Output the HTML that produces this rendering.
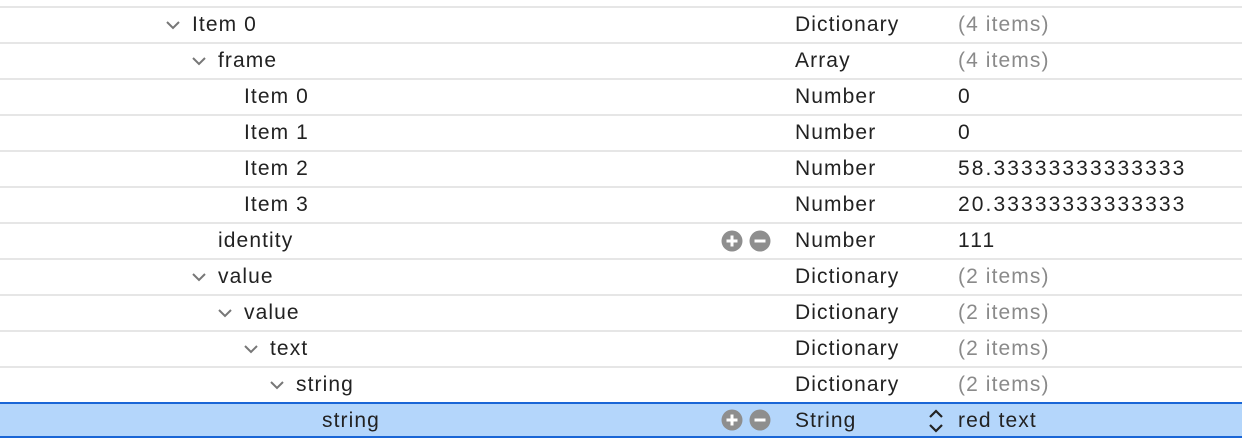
<html><head><style>
body{margin:0;width:1242px;height:446px;background:#fff;position:relative;overflow:hidden;font-family:"Liberation Sans",sans-serif;font-size:21px;letter-spacing:1.1px;color:#222}
.r{position:absolute;left:0;width:1242px;height:34px;border-top:2px solid #e6e6e6;line-height:34px}
.r span{position:absolute;top:0}
.g{color:#8a8a8a}
.n{letter-spacing:2.1px}
.sel{background:#b4d6fb;border-top:2px solid #1a66d6;border-bottom:2px solid #1a66d6;height:32px}
svg{position:absolute}
</style></head><body>
<div class="r" style="top:6px"><svg style="left:165px;top:12px" width="16" height="10"><path d="M2 2 L8 8 L14 2" stroke="#777" stroke-width="2" fill="none"/></svg><span style="left:192px">Item 0</span><span style="left:795px">Dictionary</span><span class="g" style="left:958px">(4 items)</span></div>
<div class="r" style="top:42px"><svg style="left:191px;top:12px" width="16" height="10"><path d="M2 2 L8 8 L14 2" stroke="#777" stroke-width="2" fill="none"/></svg><span style="left:218px">frame</span><span style="left:795px">Array</span><span class="g" style="left:958px">(4 items)</span></div>
<div class="r" style="top:78px"><span style="left:244px">Item 0</span><span style="left:795px">Number</span><span style="left:958px">0</span></div>
<div class="r" style="top:114px"><span style="left:244px">Item 1</span><span style="left:795px">Number</span><span style="left:958px">0</span></div>
<div class="r" style="top:150px"><span style="left:244px">Item 2</span><span style="left:795px">Number</span><span class="n" style="left:958px">58.33333333333333</span></div>
<div class="r" style="top:186px"><span style="left:244px">Item 3</span><span style="left:795px">Number</span><span class="n" style="left:958px">20.33333333333333</span></div>
<div class="r" style="top:222px"><svg style="left:721px;top:6px" width="52" height="22"><circle cx="11" cy="11" r="10.5" fill="#8e8e8e"/><path d="M5.5 11H16.5M11 5.5V16.5" stroke="#fff" stroke-width="3"/><circle cx="39" cy="11" r="10.5" fill="#8e8e8e"/><path d="M33.5 11H44.5" stroke="#fff" stroke-width="3"/></svg><span style="left:218px">identity</span><span style="left:795px">Number</span><span class="n" style="left:958px">111</span></div>
<div class="r" style="top:258px"><svg style="left:191px;top:12px" width="16" height="10"><path d="M2 2 L8 8 L14 2" stroke="#777" stroke-width="2" fill="none"/></svg><span style="left:218px">value</span><span style="left:795px">Dictionary</span><span class="g" style="left:958px">(2 items)</span></div>
<div class="r" style="top:294px"><svg style="left:217px;top:12px" width="16" height="10"><path d="M2 2 L8 8 L14 2" stroke="#777" stroke-width="2" fill="none"/></svg><span style="left:244px">value</span><span style="left:795px">Dictionary</span><span class="g" style="left:958px">(2 items)</span></div>
<div class="r" style="top:330px"><svg style="left:243px;top:12px" width="16" height="10"><path d="M2 2 L8 8 L14 2" stroke="#777" stroke-width="2" fill="none"/></svg><span style="left:270px">text</span><span style="left:795px">Dictionary</span><span class="g" style="left:958px">(2 items)</span></div>
<div class="r" style="top:366px"><svg style="left:269px;top:12px" width="16" height="10"><path d="M2 2 L8 8 L14 2" stroke="#777" stroke-width="2" fill="none"/></svg><span style="left:296px">string</span><span style="left:795px">Dictionary</span><span class="g" style="left:958px">(2 items)</span></div>
<div class="r sel" style="top:402px"><svg style="left:721px;top:5px" width="52" height="22"><circle cx="11" cy="11" r="10.5" fill="#8e8e8e"/><path d="M5.5 11H16.5M11 5.5V16.5" stroke="#fff" stroke-width="3"/><circle cx="39" cy="11" r="10.5" fill="#8e8e8e"/><path d="M33.5 11H44.5" stroke="#fff" stroke-width="3"/></svg><svg style="left:928px;top:5px" width="16" height="24"><path d="M2 8 L8 2 L14 8 M2 16 L8 22 L14 16" stroke="#222" stroke-width="2.2" fill="none"/></svg><span style="left:322px">string</span><span style="left:795px">String</span><span style="left:958px">red text</span></div>
</body></html>
